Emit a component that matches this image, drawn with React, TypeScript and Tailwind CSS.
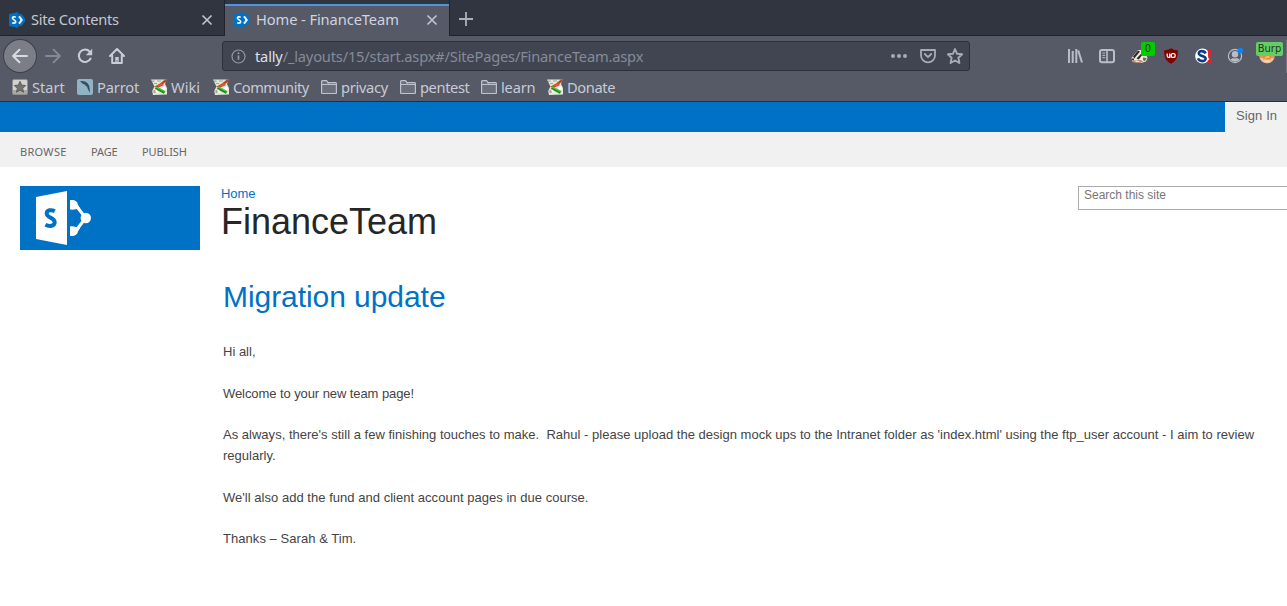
import React from "react";

const chromeFont = "font-['Noto_Sans',sans-serif]";
const pageFont = "font-['Liberation_Sans',Arial,sans-serif]";

function SharePointFavicon() {
  return (
    <svg width="16" height="16" viewBox="0 0 16 16" className="shrink-0">
      <path d="M0 2 9.4 0V16L0 14Z" fill="#0072c6" />
      <path d="M9.4 2h3L16 6.6v2.8L12.4 14h-3Z" fill="#0072c6" />
      <path d="M9.6 4.3 11 4l3 4-3 4-1.4-.3V10l1-.4.7-1.6-.7-1.6-1-.4Z" fill="#e9f3fa" />
      <path d="M6.7 5.2C5.2 4.5 3.4 4.7 3.4 6.1c0 1.8 3.3 1.7 3.3 3.6 0 1.5-2 1.8-3.5 1.1" fill="none" stroke="#fff" strokeWidth="1.6" />
    </svg>
  );
}

function CloseIcon() {
  return (
    <svg width="12" height="12" viewBox="0 0 12 12" className="shrink-0">
      <path d="M1.5 1.5 10.5 10.5M10.5 1.5 1.5 10.5" stroke="#bfc3cf" strokeWidth="1.7" fill="none" />
    </svg>
  );
}

function StartIcon() {
  return (
    <svg width="16" height="16" viewBox="0 0 16 16" className="shrink-0">
      <rect x="0.5" y="0.5" width="15" height="15" rx="1.5" fill="#d2d2ce" stroke="#8e8e8c" />
      <rect x="1" y="11" width="14" height="4" fill="#aaa9a5" />
      <path d="m8 2.3 1.7 3.8 4.1.4-3.1 2.8.9 4L8 11.2l-3.6 2.1.9-4-3.1-2.8 4.1-.4Z" fill="#73736f" stroke="#555" strokeWidth="0.8" />
    </svg>
  );
}

function ParrotIcon() {
  return (
    <svg width="16" height="16" viewBox="0 0 16 16" className="shrink-0">
      <rect width="16" height="16" rx="2" fill="#91b4c5" />
      <path d="M3 2.2c3-.6 5.6.1 7.5 2 1.8 1.8 2.3 4.2 2.2 6.8l.3 3-2-3.4-.9-2.8-1.4-1-1-1.4-2-.7-1.2-1.3Z" fill="#3c4e5b" />
    </svg>
  );
}

function WikiIcon() {
  return (
    <svg width="16" height="16" viewBox="0 0 16 16" className="shrink-0">
      <path d="M0 .5h15.5L14 5l2 4v6.5L2 16l-.8-4L3.4 7.5Z" fill="#e4e6d6" />
      <path d="M1 1.5h2.5v1.2H1ZM3 4h3v1H3ZM6 1.5h4v1H6ZM2.5 11h2v3h-2Z" fill="#a5a794" />
      <path d="M10.5 9.5 14 7l1 2.5-1.5 2Z" fill="#fff" />
      <path d="m15.2 1-5 4.2" stroke="#a84a30" strokeWidth="2.4" />
      <path d="m11.5 4-6.3 3.4 2.6.2 4.7-2" stroke="#df4a2c" strokeWidth="1.5" fill="none" />
      <path d="m4.6 8.6 9 4.9" stroke="#178f22" strokeWidth="3" />
      <path d="m5 8 8.4 4.3" stroke="#55dc48" strokeWidth="1" />
      <path d="m4.6 10.6 2.4 3" stroke="#fff" strokeWidth="1.2" />
    </svg>
  );
}

function FolderIcon() {
  return (
    <svg width="16" height="16" viewBox="0 0 16 16" className="shrink-0">
      <path d="M.6 14V2.5q0-.9.9-.9h4l1.6 2h7.4q.9 0 .9.9V14q0 .5-.5.5H1.1Q.6 14.5.6 14Z" fill="#6b6f7b" stroke="#bec2ce" strokeWidth="1.2" />
      <path d="M.8 5.5h5.7l1-1.8" fill="none" stroke="#bec2ce" />
      <path d="M6.5 5.5h8.8" stroke="#bec2ce" />
    </svg>
  );
}

const bookmarks = [
  { label: "Start", width: "w-[65px]", icon: <StartIcon />, tracking: "" },
  { label: "Parrot", width: "w-[74px]", icon: <ParrotIcon />, tracking: "tracking-[-0.15px]" },
  { label: "Wiki", width: "w-[62px]", icon: <WikiIcon />, tracking: "" },
  { label: "Community", width: "w-[108px]", icon: <WikiIcon />, tracking: "tracking-[-0.5px]" },
  { label: "privacy", width: "w-[79px]", icon: <FolderIcon />, tracking: "tracking-[-0.3px]" },
  { label: "pentest", width: "w-[81px]", icon: <FolderIcon />, tracking: "tracking-[-0.4px]" },
  { label: "learn", width: "w-[66px]", icon: <FolderIcon />, tracking: "tracking-[-0.2px]" },
  { label: "Donate", width: "w-[80px]", icon: <WikiIcon />, tracking: "tracking-[-0.4px]" },
];

function TabStrip() {
  return (
    <div className="flex h-9 bg-[#31353f] text-[14.67px] text-[#c3c7d3]">
      <div className="flex w-[225px] items-center border-r border-b border-[#20222c] pt-1 pr-[11px] pl-[9px]">
        <SharePointFavicon />
        <span className="ml-1.5 flex-1 pb-0.5 tracking-[-0.28px] whitespace-nowrap">Site Contents</span>
        <CloseIcon />
      </div>
      <div className="mt-1 flex w-[224px] items-center border-t-2 border-[#4f94e3] bg-[#565a67] pr-[11px] pb-0.5 pl-[9px] text-[#d0d4df]">
        <SharePointFavicon />
        <span className="ml-1.5 flex-1 pb-0.5 tracking-[-0.09px] whitespace-nowrap">Home - FinanceTeam</span>
        <CloseIcon />
      </div>
      <div className="flex flex-1 items-center border-b border-l border-[#20222c] pt-[3px] pl-[9px]">
        <svg width="14" height="14" viewBox="0 0 14 14">
          <path d="M7 0v14M0 7h14" stroke="#abb0bc" strokeWidth="1.8" />
        </svg>
      </div>
    </div>
  );
}

function Slot({ children }: { children: React.ReactNode }) {
  return <div className="relative flex h-8 w-8 items-center justify-center">{children}</div>;
}

function NavBar() {
  return (
    <div className="flex h-[37px] items-center pt-[3px] pl-[4px]">
      <div className="flex w-[218px] items-center">
        <div className="flex h-8 w-8 items-center justify-center rounded-full bg-[#7b7e87] ring-1 ring-[#3d404b]">
          <svg width="16" height="16" viewBox="0 0 16 16" fill="none" stroke="#d7dae3" strokeWidth="2" strokeLinecap="round" strokeLinejoin="round">
            <path d="M15 8H1.3M7.4 1.7 1.1 8l6.3 6.3" />
          </svg>
        </div>
        <div className="ml-px flex items-center">
          <Slot>
            <svg width="16" height="16" viewBox="0 0 16 16" fill="none" stroke="#858994" strokeWidth="1.9" strokeLinecap="round" strokeLinejoin="round">
              <path d="M1 8h13.7M8.6 1.7 14.9 8l-6.3 6.3" />
            </svg>
          </Slot>
          <Slot>
            <svg width="16" height="16" viewBox="0 0 16 16">
              <path d="M12.7 3.6A6.2 6.2 0 1 0 13.6 10.6" fill="none" stroke="#c8ccd7" strokeWidth="2.1" strokeLinecap="round" />
              <path d="M15.2.8v6.4H8.8Z" fill="#c8ccd7" />
            </svg>
          </Slot>
          <Slot>
            <svg width="16" height="16" viewBox="0 0 16 16" fill="none" stroke="#c8ccd7" strokeWidth="2" strokeLinecap="round" strokeLinejoin="round">
              <path d="m1 8 7-7 7 7M3.2 7.5V15h9.6V7.5" />
              <path d="M8 15V9" strokeWidth="3.4" strokeLinecap="butt" />
              <path d="M8 13.6v-1.3" stroke="#565a67" strokeWidth="1" strokeLinecap="butt" />
            </svg>
          </Slot>
        </div>
      </div>
      <div className="flex h-[30px] w-[748px] items-center rounded-[3px] border border-[#2c303b] bg-[#414551] pl-[9px]">
        <svg width="15" height="15" viewBox="0 0 15 15" className="-ml-px">
          <circle cx="7.5" cy="7.5" r="6.5" fill="none" stroke="#9297a2" strokeWidth="1.2" />
          <path d="M7.5 6.4v4.4" stroke="#9297a2" strokeWidth="1.7" />
          <circle cx="7.5" cy="4.3" r="1" fill="#9297a2" />
        </svg>
        <span className="ml-[9px] flex-1 text-[14.67px] tracking-[-0.185px] whitespace-nowrap text-[#858b98]">
          <span className="text-[#dce0ea]">tally</span>/_layouts/15/start.aspx#/SitePages/FinanceTeam.aspx
        </span>
        <div className="flex w-[79px] items-center justify-between pr-[6px]">
          <svg width="18" height="16" viewBox="0 0 18 16" fill="#a7abb6">
            <circle cx="3" cy="8" r="2" />
            <circle cx="9" cy="8" r="2" />
            <circle cx="15" cy="8" r="2" />
          </svg>
          <svg width="16" height="16" viewBox="0 0 16 16" fill="none" stroke="#a7abb6" strokeWidth="1.8" strokeLinecap="round" strokeLinejoin="round">
            <path d="M1 2h14v5.5a7 6.8 0 0 1-14 0Z" />
            <path d="M4.8 6 8 9.2 11.2 6" />
          </svg>
          <svg width="16" height="16" viewBox="0 0 16 16" fill="none" stroke="#a7abb6" strokeWidth="1.9" strokeLinejoin="round">
            <path d="m8 1.1 2.1 4.7 5 .5-3.7 3.5 1 5.2L8 12.5 3.6 15l1-5.2L.9 6.3l5-.5Z" />
          </svg>
        </div>
      </div>
      <div className="ml-[89px] flex">
        <Slot>
          <svg width="16" height="16" viewBox="0 0 16 16" stroke="#b8bdc8" strokeWidth="2" fill="none">
            <path d="M2 1v14M5.7 3v12M9.3 1v14M11.2 2.5 15 14.5" />
          </svg>
        </Slot>
        <Slot>
          <svg width="16" height="16" viewBox="0 0 16 16" fill="none" stroke="#b8bdc8">
            <rect x="1" y="2" width="14" height="12.2" rx="2" strokeWidth="2" />
            <path d="M8 2v12" strokeWidth="1.6" />
            <path d="M3.3 5h2.9M3.3 7.4h2.9M3.3 9.7h2.9" />
          </svg>
        </Slot>
        <Slot>
          <svg width="17" height="16" viewBox="0 0 17 16">
            <path d="M.5 10 7 2l6 0 3.5 8-1.5 3.5-5 1.5-8.5-1.5Z" fill="#eee9e2" />
            <path d="M2 8.5 7 2.6l2 .8-4 4.8-1.6 2.4Z" fill="#2c2a28" />
            <path d="m5.5 10.6 4.8-5.2 1.3 1-3.8 5Z" fill="#2c2a28" />
            <path d="m.8 10.6 2.4 1.6 6-.3 3 1.6-3.2 1.6-7-.7Z" fill="#b68b67" />
            <path d="M12 9.4 15.8 10l-2 3.2-1.8-1Z" fill="#806755" />
            <path d="m3.2 12.6 3.4.2 2.8 1-4.4-.1Z" fill="#fff" />
            <path d="M1 10.4h2v1.4H1Z" fill="#161616" />
          </svg>
          <span className="absolute top-[2px] left-[18px] flex h-[14px] w-[14px] items-center justify-center rounded-[2px] bg-[#00cc00] font-['DejaVu_Sans',sans-serif] text-[10px] leading-none text-[#17360f]">0</span>
        </Slot>
        <Slot>
          <svg width="16" height="16" viewBox="0 0 16 16">
            <path d="M8 .3c2 1.3 4.1 1.9 6.8 2 .2 6.5-1 10-6.8 13.5C2.2 12.3 1 8.8 1.2 2.3 3.9 2.2 6 1.6 8 .3Z" fill="#800000" />
            <path d="M4.2 5.6v2.3q0 1.4 1.3 1.4h1.3V5.6M11 5.6q1.2 0 1.2 1.85T11 9.3H9.3q-1.1 0-1.1-1.85T9.3 5.6Z" fill="none" stroke="#fff" strokeWidth="1.3" />
          </svg>
        </Slot>
        <Slot>
          <svg width="16" height="16" viewBox="0 0 16 16">
            <circle cx="7.5" cy="8" r="7.4" fill="#fff" />
            <path d="M10.6 5.4C9.4 2.4 3.8 2.3 3.8 5.2c0 3.4 6.8 2 6.8 5.4 0 3.3-6.3 3.4-7.6-.2" fill="none" stroke="#0a3c86" strokeWidth="2.6" />
            <path d="M12.6 1.6H16l-.7 8.8h-2ZM12.8 12h3v3h-3Z" fill="#ee1c23" />
          </svg>
        </Slot>
        <Slot>
          <svg width="18" height="18" viewBox="0 0 18 18">
            <circle cx="9" cy="9" r="6.6" fill="none" stroke="#b8bdc8" strokeWidth="1.2" />
            <circle cx="9" cy="7.3" r="3.2" fill="#b8bdc8" />
            <path d="M4.6 12.8c1.2-2 2.8-1.4 4.4-1.4s3.2-.6 4.4 1.4q-4.4 4-8.8 0Z" fill="#b8bdc8" />
            <circle cx="14.3" cy="3.6" r="2.8" fill="#0a84ff" />
          </svg>
        </Slot>
        <Slot>
          <svg width="16" height="16" viewBox="0 0 16 16">
            <ellipse cx="8" cy="8.5" rx="7.7" ry="6.8" fill="#e59a5c" />
            <path d="M1 10h14q-1.6 4.8-7 5.3Q2.6 14.8 1 10Z" fill="#e8c6a4" />
            <path d="M3.5 8h9l-1.2 3.4H4.7Z" fill="#ee8a28" />
            <path d="m5.6 10.8 2.2-2 2.6.4M5.5 13h5" stroke="#fbe8d4" fill="none" />
          </svg>
          <span className="absolute top-[2px] left-[5px] flex h-[14px] w-[27px] items-center justify-center rounded-[2px] bg-[#66cc66] font-['DejaVu_Sans',sans-serif] text-[10px] leading-none text-[#1c3b1b]">Burp</span>
        </Slot>
      </div>
      <div className="ml-[3px] h-[33px] w-px bg-[#737783]" />
    </div>
  );
}

function BrowserChrome() {
  return (
    <div className={`h-[102px] border-b border-[#2b2e38] bg-[#565a67] ${chromeFont}`}>
      <TabStrip />
      <NavBar />
      <div className="flex h-7 items-center pb-px pl-3 text-[14.67px] text-[#c7cbd7]">
        {bookmarks.map((b) => (
          <div key={b.label} className={`flex shrink-0 items-center gap-1 whitespace-nowrap ${b.width}`}>
            {b.icon}
            <span className={b.tracking}>{b.label}</span>
          </div>
        ))}
      </div>
    </div>
  );
}

function SiteLogo() {
  return (
    <div className="h-16 w-[180px] shrink-0 bg-[#0072c6]">
      <svg width="180" height="64" viewBox="0 0 180 64">
        <path d="M16 11 47 5v54l-31-6Z" fill="#fff" />
        <path d="M34.8 25.2c-3.4-1.8-8.1-1.3-8.1 2.2 0 4.8 8 4 8 8.8 0 4-5.2 4.6-9.3 2.5" fill="none" stroke="#0072c6" strokeWidth="4" />
        <path d="m54.5 17.5 11.2 14.5L54.5 46.5" fill="none" stroke="#fff" strokeWidth="3" />
        <path d="M50 14.3c4-.9 7.5 1.1 7.8 4.1l2.7 4.5c-3.1-1.6-4.8 1.6-10.5.7ZM50 49.8c4 .9 7.5-1.1 7.8-4.1l2.7-4.5c-3.1 1.6-4.8-1.6-10.5-.7Z" fill="#fff" />
        <circle cx="65.8" cy="32" r="5.2" fill="#fff" />
      </svg>
    </div>
  );
}

export default function App() {
  return (
    <div className={`h-[606px] w-full overflow-hidden bg-white text-[13px] text-[#444] ${pageFont}`}>
      <BrowserChrome />
      <div className="flex h-[30px] bg-[#0072c6]">
        <div className="ml-auto w-[62px] bg-[#f1f1f1] pt-1 pl-[11px] tracking-[0.1px] whitespace-nowrap text-[#666]">Sign In</div>
      </div>
      <nav className="flex h-[35px] items-center gap-6 bg-[#f1f1f1] pt-[5px] pl-5 font-['Noto_Sans',sans-serif] text-[11px] text-[#666]">
        <span className="w-[47px] tracking-[0.3px]">BROWSE</span>
        <span className="w-[27px] tracking-[-0.1px]">PAGE</span>
        <span className="w-[46px] tracking-[-0.12px]">PUBLISH</span>
      </nav>
      <header className="flex h-[83px] pt-[19px] pl-5">
        <SiteLogo />
        <div className="ml-[21px] flex-1">
          <div className="h-4 leading-4 tracking-[-0.1px] text-[#0072c6]">Home</div>
          <h1 className="text-[36px] leading-[40px] text-[#262626]">FinanceTeam</h1>
        </div>
        <div className="h-6 w-[209px] border border-r-0 border-[#ababab] pl-[5px] text-[12px] leading-[17px] text-[#777]">Search this site</div>
      </header>
      <main className="pr-4 pl-[223px] leading-[20.8px]">
        <h2 className="mt-[27px] mb-[25px] text-[30px] leading-[40px] tracking-[-0.06px] text-[#0072c6]">Migration update</h2>
        <p>Hi all,</p>
        <p className="mt-[20.8px] tracking-[-0.08px]">Welcome to your new team page!</p>
        <p className="mt-[20.8px] tracking-[0.014px] whitespace-nowrap">
          As always, there's still a few finishing touches to make.&nbsp; Rahul - please upload the design mock ups to the Intranet folder as 'index.html' using the ftp_user account - I aim to review
          <br />
          regularly.
        </p>
        <p className="mt-[20.8px] tracking-[0.03px]">We'll also add the fund and client account pages in due course.</p>
        <p className="mt-[20.8px] tracking-[0.05px]">Thanks – Sarah &amp; Tim.</p>
      </main>
    </div>
  );
}
